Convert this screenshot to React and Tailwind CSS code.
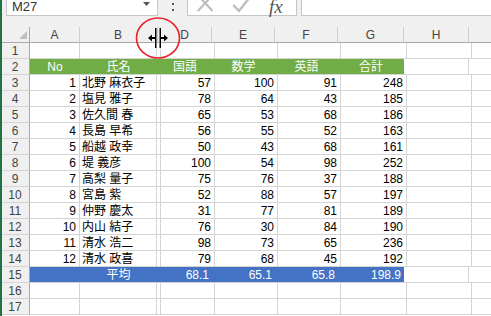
import React from "react";

const data = [
  [1, "北野 麻衣子", 57, 100, 91, 248],
  [2, "塩見 雅子", 78, 64, 43, 185],
  [3, "佐久間 春", 65, 53, 68, 186],
  [4, "長島 早希", 56, 55, 52, 163],
  [5, "船越 政幸", 50, 43, 68, 161],
  [6, "堤 義彦", 100, 54, 98, 252],
  [7, "高梨 量子", 75, 76, 37, 188],
  [8, "宮島 紫", 52, 88, 57, 197],
  [9, "仲野 慶太", 31, 77, 81, 189],
  [10, "内山 結子", 76, 30, 84, 190],
  [11, "清水 浩二", 98, 73, 65, 236],
  [12, "清水 政喜", 79, 68, 45, 192],
];

const W = {
  rh: "w-[28px]",
  A: "w-[50px]",
  B: "w-[77px]",
  C: "w-[1px]",
  D: "w-[54px]",
  E: "w-[63px]",
  F: "w-[63px]",
  G: "w-[66px]",
  H: "w-[65px]",
  I: "w-[40px]",
};

const grid = "border-r border-b border-[#d4d4d4] shrink-0 h-[16px] flex items-center";

function RowHead({ n }) {
  return (
    <div className={`${W.rh} shrink-0 h-[16px] border-r border-r-[#a8a8a8] border-b border-b-[#d4d4d4] bg-[#f0f0f0] flex items-center justify-center text-[#444] pr-[1px]`}>
      {n}
    </div>
  );
}

function Cell({ w, children, align = "right", cls = "" }) {
  const a = align === "right" ? "justify-end pr-[3px]" : align === "center" ? "justify-center" : "justify-start pl-[2px]";
  return <div className={`${w} ${grid} ${a} ${cls}`}>{children}</div>;
}

function EmptyRow({ n }) {
  return (
    <div className="flex shrink-0">
      <RowHead n={n} />
      <Cell w={W.A} />
      <Cell w={W.B} />
      <Cell w={W.C} />
      <Cell w={W.D} />
      <Cell w={W.E} />
      <Cell w={W.F} />
      <Cell w={W.G} />
      <Cell w={W.H} />
      <Cell w={W.I} />
    </div>
  );
}

function BandCell({ w, children, align = "center", bg }) {
  const a = align === "right" ? "justify-end pr-[3px]" : "justify-center";
  return <div className={`${w} shrink-0 h-[16px] flex items-center border-b border-[#d4d4d4] text-white ${bg} ${a}`}>{children}</div>;
}

function HeadCell({ w, children, cls = "" }) {
  return (
    <div className={`${w} shrink-0 h-[16px] flex items-center justify-center border-r border-r-[#cfcfcf] border-b border-b-[#a8a8a8] bg-[#f0f0f0] text-[#444] ${cls}`}>
      {children}
    </div>
  );
}

export default function App() {
  return (
    <div className="relative w-[491px] h-[316px] overflow-hidden bg-white text-[12px] leading-none" style={{ fontFamily: "'Liberation Sans','Noto Sans CJK JP',sans-serif" }}>
      <div className="flex h-full">
        <div className="w-[2px] shrink-0 bg-[#217346]" />
        <div className="flex-1 flex flex-col bg-[#f0f0f0]">
          {/* formula bar */}
          <div className="h-[27px] shrink-0 flex items-start">
            <div className="ml-[4px] w-[152px] h-[16px] bg-white border-x border-b border-[#c6c6c6] flex items-center justify-between pl-[5px] pr-[7px]">
              <span className="text-[13px] text-[#333] -mt-[3px]">M27</span>
              <svg width="7" height="4" viewBox="0 0 7 4" className="-mt-[7px]"><path d="M0 0h7L3.5 4z" fill="#555" /></svg>
            </div>
            <div className="w-[29px] h-[16px] flex flex-col items-center justify-end gap-[4px] pb-[5px]">
              <div className="w-[2px] h-[2px] bg-[#555]" />
              <div className="w-[2px] h-[2px] bg-[#555]" />
            </div>
            <div className="relative w-[110px] h-[16px] bg-white border-x border-b border-[#c6c6c6] flex items-end">
              <svg width="110" height="16" viewBox="0 0 110 16">
                <path d="M10 -4L25 12M25 -4L10 12" stroke="#bdbdbd" strokeWidth="2.2" fill="none" />
                <path d="M46 6L52 12L63 -2" stroke="#bdbdbd" strokeWidth="2.4" fill="none" />
              </svg>
              <span className="absolute left-[81px] top-[-3px] text-[19px] leading-none italic text-[#555]" style={{ fontFamily: "'Liberation Serif',serif" }}>fx</span>
            </div>
            <div className="ml-[4px] flex-1 h-[16px] bg-white border-l border-b border-[#c6c6c6]" />
          </div>

          {/* column header */}
          <div className="flex shrink-0">
            <div className={`${W.rh} shrink-0 h-[16px] border-r border-r-[#a8a8a8] border-b border-b-[#a8a8a8] bg-[#f0f0f0] relative`}>
              <svg className="absolute right-[2px] bottom-[3px]" width="8" height="8" viewBox="0 0 8 8"><path d="M8 0V8H0z" fill="#bfbfbf" /></svg>
            </div>
            <HeadCell w={W.A}>A</HeadCell>
            <HeadCell w={W.B}>B</HeadCell>
            <HeadCell w="w-[2px]" cls="-ml-[1px]" />
            <HeadCell w={W.D}>D</HeadCell>
            <HeadCell w={W.E}>E</HeadCell>
            <HeadCell w={W.F}>F</HeadCell>
            <HeadCell w={W.G}>G</HeadCell>
            <HeadCell w={W.H}>H</HeadCell>
            <HeadCell w={W.I} />
          </div>

          <div className="flex-1 flex flex-col bg-white">
            <EmptyRow n={1} />
            <div className="flex shrink-0">
              <RowHead n={2} />
              <BandCell w={W.A} bg="bg-[#70ad47]">No</BandCell>
              <BandCell w={W.B} bg="bg-[#70ad47]">氏名</BandCell>
              <BandCell w={W.C} bg="bg-[#70ad47]" />
              <BandCell w={W.D} bg="bg-[#70ad47]">国語</BandCell>
              <BandCell w={W.E} bg="bg-[#70ad47]">数学</BandCell>
              <BandCell w={W.F} bg="bg-[#70ad47]">英語</BandCell>
              <BandCell w={W.G} bg="bg-[#70ad47]">合計</BandCell>
              <Cell w={W.H} />
              <Cell w={W.I} />
            </div>
            {data.map((r, i) => (
              <div className="flex shrink-0 text-black" key={i}>
                <RowHead n={i + 3} />
                <Cell w={W.A}>{r[0]}</Cell>
                <Cell w={W.B} align="left">{r[1]}</Cell>
                <Cell w={W.C} />
                <Cell w={W.D}>{r[2]}</Cell>
                <Cell w={W.E}>{r[3]}</Cell>
                <Cell w={W.F}>{r[4]}</Cell>
                <Cell w={W.G}>{r[5]}</Cell>
                <Cell w={W.H} />
                <Cell w={W.I} />
              </div>
            ))}
            <div className="flex shrink-0">
              <RowHead n={15} />
              <BandCell w={W.A} bg="bg-[#4472c4]" />
              <BandCell w={W.B} bg="bg-[#4472c4]">平均</BandCell>
              <BandCell w={W.C} bg="bg-[#4472c4]" />
              <BandCell w={W.D} bg="bg-[#4472c4]" align="right">68.1</BandCell>
              <BandCell w={W.E} bg="bg-[#4472c4]" align="right">65.1</BandCell>
              <BandCell w={W.F} bg="bg-[#4472c4]" align="right">65.8</BandCell>
              <BandCell w={W.G} bg="bg-[#4472c4]" align="right">198.9</BandCell>
              <Cell w={W.H} />
              <Cell w={W.I} />
            </div>
            <EmptyRow n={16} />
            <EmptyRow n={17} />
          </div>
        </div>
      </div>

      {/* resize cursor + red circle */}
      <svg className="absolute left-[134px] top-[15px]" width="48" height="46" viewBox="0 0 48 46">
        <ellipse cx="24" cy="23" rx="21.5" ry="20" fill="none" stroke="#e8202a" strokeWidth="1.6" />
        <path d="M14 23L18 19.5V22H21V13H22.5V33H21V24H18V26.5Z M34 23L30 19.5V22H27V13H25.5V33H27V24H30V26.5Z" fill="#000" stroke="#fff" strokeWidth="0.8" paintOrder="stroke" />
      </svg>
    </div>
  );
}
